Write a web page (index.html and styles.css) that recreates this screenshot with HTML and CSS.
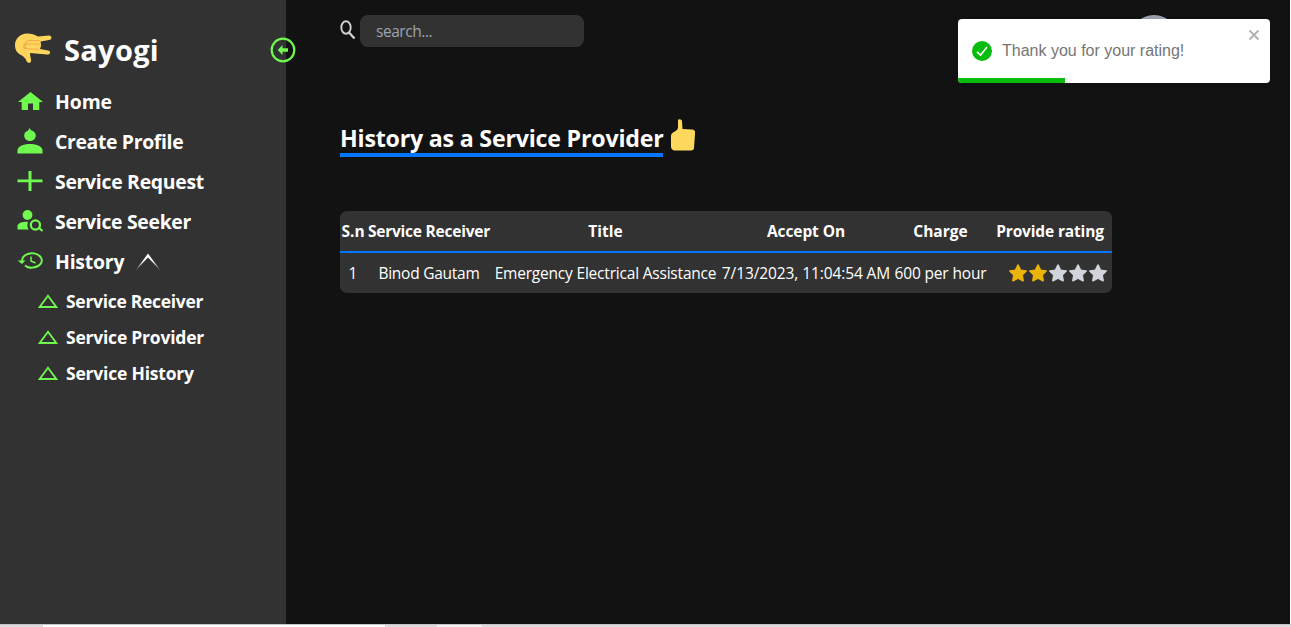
FILE: index.html
```html
<!DOCTYPE html>
<html lang="en">
<head>
<meta charset="utf-8">
<title>Sayogi</title>
<link rel="stylesheet" href="styles.css">
</head>
<body>
<div class="app">
  <aside class="sidebar">
    <div class="brand">
      <svg class="brand-icon" width="38" height="34" viewBox="0 0 38 34"><path d="M12 1.500C6 2 1 7 1 13c0 5 2 8 6 10 3 2 4.500 3 5.500 6 .7 2.200 4 2.500 4.500.5.500-2-1-5-1-8.500l17 1.500c4 0 4-3.700 1-4l-8-1.500c1.500-3 1-5 .5-7.500l8.500-1.500c3.500-.5 3-4.500 0-4.500L24 4.500C20 2.500 17 1.200 12 1.500z" fill="#ffd65b"/><path d="M25 8.500l-8-.3c-3 0-5 1-5 3.300M26 12H14c-4 0-4 4.500 0 4.800l11 .4M11.500 11c-2 1-2.500 4-1 5.500" fill="none" stroke="#f3a94a" stroke-width="1.100" stroke-linecap="round"/></svg>
      <h1 class="brand-name">Sayogi</h1>
    </div>
    <svg class="collapse" width="26" height="26" viewBox="0 0 26 26"><circle cx="13" cy="13" r="11.300" fill="none" stroke="#70f94e" stroke-width="2.200"/><path d="M7.700 13l4.800-5v3.300H18v3.400h-5.500V18z" fill="#70f94e"/></svg>
    <nav class="nav">
      <a class="item"><svg class="icon" viewBox="0 0 26 28"><path d="M13.500 5L26 15h-3.700v8H16v-6.500h-5V23H4.700v-8H1z"/></svg><span class="t-home">Home</span></a>
      <a class="item"><svg class="icon" viewBox="0 0 26 28"><path d="M12.500 1l1.500 2.200c3 .5 4.800 3 4.800 5.300 0 3.300-2.800 5.500-5.800 5.500s-5.800-2.200-5.800-5.500c0-2.600 1.800-4.500 4-5.100zM.5 26.500v-3C.5 19.500 6 17 13 17s12.500 2.500 12.500 6.500v3z"/></svg><span class="t-create">Create Profile</span></a>
      <a class="item"><svg class="icon" viewBox="0 0 26 28"><path d="M11.500 4h3v8.500h11v2.700h-11V24h-3v-8.800H.5v-2.700h11z"/></svg><span class="t-request">Service Request</span></a>
      <a class="item"><svg class="icon" viewBox="0 0 26 28"><circle cx="10.500" cy="8" r="4.900"/><path d="M.5 22.500V19c0-3 5-4.500 10.500-4.300-1 2.500-.8 5.600.8 7.800z"/><circle cx="18.400" cy="18" r="4.600" fill="none" stroke="#70f94e" stroke-width="2.300"/><path d="M21.500 20.500l4 3.500" stroke="#70f94e" stroke-width="2.300"/></svg><span class="t-seeker">Service Seeker</span></a>
      <a class="item"><svg class="icon" viewBox="0 0 26 28"><path d="M5.200 14A9.800 7.200 0 1 1 8 18.500M8 18.500A9.800 7.200 0 0 0 14.500 21" fill="none" stroke="#70f94e" stroke-width="1.900"/><path d="M.5 13.500h8L5 17z"/><path d="M14 9.500V14l4.500 2" fill="none" stroke="#70f94e" stroke-width="1.500"/></svg><span class="t-history">History</span>
        <svg class="chevron" width="26" height="18" viewBox="0 0 26 18"><defs><linearGradient id="fade" x1="0" y1="0" x2="0" y2="1"><stop offset="0" stop-color="#fff"/><stop offset=".5" stop-color="#eee"/><stop offset="1" stop-color="#888"/></linearGradient></defs><path d="M13 .5L25.500 17.500 13 4.500 .5 17.500z" fill="url(#fade)"/></svg></a>
    </nav>
    <nav class="subnav">
      <a class="subitem"><svg class="tri" viewBox="0 0 20 14"><path d="M10 1.700L18.300 13H1.700z"/></svg><span class="t-receiver">Service Receiver</span></a>
      <a class="subitem"><svg class="tri" viewBox="0 0 20 14"><path d="M10 1.700L18.300 13H1.700z"/></svg><span class="t-provider">Service Provider</span></a>
      <a class="subitem"><svg class="tri" viewBox="0 0 20 14"><path d="M10 1.700L18.300 13H1.700z"/></svg><span class="t-servhist">Service History</span></a>
    </nav>
  </aside>
  <main class="main">
    <div class="search">
      <svg class="search-icon" width="16" height="20" viewBox="0 0 16 20"><ellipse cx="6" cy="7.500" rx="4.700" ry="6.200" fill="none" stroke="#d2d2d2" stroke-width="1.900"/><path d="M9 12.500l5.500 6" stroke="#d2d2d2" stroke-width="2.300"/></svg>
      <div class="search-box"><span class="t-search">search...</span></div>
    </div>
    <div class="heading">
      <h2 class="title"><span class="t-title">History as a Service Provider</span></h2>
      <svg class="thumb" width="26" height="34" viewBox="0 0 26 34"><path d="M8 2.500C8 .5 12 .7 12 3.500l.5 7.500 9.500.5c2 .1 3.300 1.200 3.100 3.200L24 30c-.2 1.800-1.500 2.500-3 2.500H6c-4 0-5-2-5-4.500V18c0-2 1-3 3-4 3-1.500 4-3 4-5.500z" fill="#ffd95d"/></svg>
    </div>
    <div class="table">
      <div class="row head">
        <span class="h-sn">S.n</span><span class="h-receiver">Service Receiver</span><span class="h-title">Title</span><span class="h-accept">Accept On</span><span class="h-charge">Charge</span><span class="h-rating">Provide rating</span>
      </div>
      <div class="row">
        <span>1</span><span class="c-name">Binod Gautam</span><span class="c-title">Emergency Electrical Assistance</span><span class="c-date">7/13/2023, 11:04:54 AM</span><span class="c-charge">600 per hour</span>
        <div class="stars">
          <svg class="star on" viewBox="0 0 20 20"><path d="M10 2l2.500 5.200 5.700.8-4.100 4 1 5.700L10 15l-5.100 2.700 1-5.700-4.100-4 5.700-.8z"/></svg>
          <svg class="star on" viewBox="0 0 20 20"><path d="M10 2l2.500 5.200 5.700.8-4.100 4 1 5.700L10 15l-5.100 2.700 1-5.700-4.100-4 5.700-.8z"/></svg>
          <svg class="star" viewBox="0 0 20 20"><path d="M10 2l2.500 5.200 5.700.8-4.100 4 1 5.700L10 15l-5.100 2.700 1-5.700-4.100-4 5.700-.8z"/></svg>
          <svg class="star" viewBox="0 0 20 20"><path d="M10 2l2.500 5.200 5.700.8-4.100 4 1 5.700L10 15l-5.100 2.700 1-5.700-4.100-4 5.700-.8z"/></svg>
          <svg class="star" viewBox="0 0 20 20"><path d="M10 2l2.500 5.200 5.700.8-4.100 4 1 5.700L10 15l-5.100 2.700 1-5.700-4.100-4 5.700-.8z"/></svg>
        </div>
      </div>
    </div>
  </main>
</div>
<footer class="strip"><i class="s1"></i><i class="s2"></i><i class="s3"></i><i class="s4"></i></footer>
<div class="avatar"></div>
<div class="toast">
  <svg class="check" width="20" height="20" viewBox="0 0 20 20"><circle cx="10" cy="10" r="10" fill="#07bc0c"/><path d="M5 10.800l3.600 3.200L15 6" fill="none" stroke="#fff" stroke-width="1.600"/></svg>
  <span class="t-toast">Thank you for your rating!</span>
  <svg class="close" width="12" height="12" viewBox="0 0 12 12"><path d="M1.500 1.500l9 9M10.500 1.500l-9 9" stroke="#b2b2b2" stroke-width="2"/></svg>
  <div class="progress"></div>
</div>
</body>
</html>
```
FILE: styles.css
```css
* { box-sizing: border-box; }
body { margin: 0; width: 1291px; height: 627px; overflow: hidden; background: #fff; color: #fff; font-family: "Open Sans", "Noto Sans", sans-serif; }
span, h1 { white-space: nowrap; }
.app { display: flex; width: 1290px; height: 624px; background: #121212; }
.sidebar { position: relative; width: 286px; background: #323232; }
.brand { display: flex; align-items: center; height: 82px; padding: 18px 0 0 14px; }
.brand-icon { margin-top: -2px; }
.brand-name { margin: 0 0 0 12px; font-size: 29px; font-weight: 700; line-height: 36px; letter-spacing: .3px; }
.collapse { position: absolute; left: 270px; top: 37px; z-index: 1; }
.nav { display: flex; flex-direction: column; }
.item { display: flex; align-items: center; height: 40px; padding-left: 17px; font-size: 19.400px; font-weight: 700; }
.item span, .subitem span { padding-bottom: 2px; }
.icon { width: 26px; height: 28px; margin: 0 12px 2px 0; fill: #70f94e; }
.chevron { margin-left: 11px; }
.t-home { letter-spacing: -.1px; }
.t-create { letter-spacing: -.34px; }
.t-request { letter-spacing: -.28px; }
.t-seeker { letter-spacing: -.3px; }
.t-history { letter-spacing: -.2px; }
.subnav { display: flex; flex-direction: column; padding-top: 2px; }
.subitem { display: flex; align-items: center; height: 36px; padding-left: 38px; font-size: 17.500px; font-weight: 700; }
.tri { width: 20px; height: 14px; margin: 0 8px 2px 0; fill: none; stroke: #70f94e; stroke-width: 1.800; }
.t-receiver { letter-spacing: -.3px; }
.t-provider { letter-spacing: -.22px; }
.t-servhist { letter-spacing: -.2px; }
.main { flex: 1; padding: 15px 0 0 54px; }
.search { display: flex; height: 32px; }
.search-icon { margin: 5px 4px 0 0; }
.search-box { display: flex; align-items: center; width: 224px; border-radius: 8px; background: #323232; padding-left: 16px; color: #9ca3af; font-size: 15.500px; letter-spacing: -.45px; }
.heading { display: flex; margin-top: 71px; height: 40px; }
.title { margin: 3px 0 0; height: 36px; width: 323px; border-bottom: 4px solid #0075ff; font-size: 23.200px; line-height: 34px; letter-spacing: -.21px; }
.thumb { margin-left: 7px; }
.table { width: 772px; height: 82px; margin-top: 53px; border-radius: 7px; background: #323232; overflow: hidden; }
.row { display: grid; grid-template-columns: 26px 126px 227px 174px 95px 124px; height: 40px; align-items: center; justify-items: center; font-size: 15.500px; }
.head { height: 42px; border-bottom: 2px solid #0075ff; font-weight: 700; }
.h-receiver { letter-spacing: -.22px; }
.h-accept { letter-spacing: -.1px; }
.h-rating { letter-spacing: -.15px; }
.c-name { letter-spacing: -.25px; }
.c-title { letter-spacing: -.2px; }
.c-date { letter-spacing: -.1px; }
.c-charge { letter-spacing: -.15px; }
.stars { display: flex; justify-self: end; padding-right: 4px; }
.star { width: 20px; height: 20px; fill: #d1d5db; stroke: #d1d5db; stroke-width: 1.600; stroke-linejoin: round; }
.star.on { fill: #eab308; stroke: #eab308; }
.strip { display: flex; height: 3px; width: 1291px; background: #ddd9df; border-top: 1px solid #c8c4c8; }
.s1 { width: 43px; }
.s2 { width: 342px; background: #fff; }
.s3 { width: 52px; }
.s4 { width: 45px; background: #f3f0f1; }
.avatar { position: absolute; left: 1129px; top: 15px; width: 50px; height: 50px; border-radius: 50%; background: #9ca3af; }
.toast { position: absolute; left: 958px; top: 19px; width: 312px; height: 64px; display: flex; align-items: center; padding-left: 14px; border-radius: 4px; background: #fff; color: #757575; overflow: hidden; box-shadow: 0 1px 10px rgba(0,0,0,.1); font: 16px "Liberation Sans", sans-serif; }
.t-toast { margin-left: 10px; }
.close { position: absolute; right: 10px; top: 10px; }
.progress { position: absolute; left: 0; bottom: 0; width: 107px; height: 5px; background: #07bc0c; }
```
